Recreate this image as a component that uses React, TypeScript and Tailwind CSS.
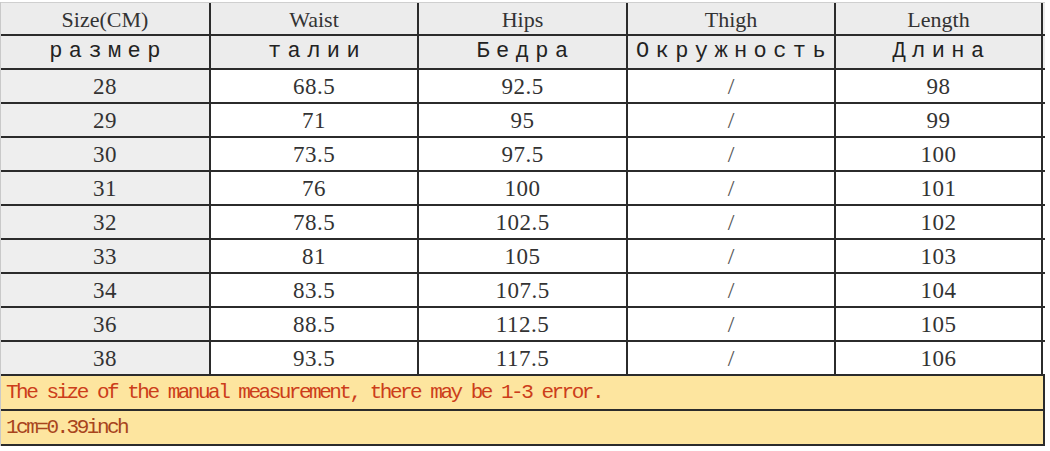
const rows = [
  ["28", "68.5", "92.5", "/", "98"],
  ["29", "71", "95", "/", "99"],
  ["30", "73.5", "97.5", "/", "100"],
  ["31", "76", "100", "/", "101"],
  ["32", "78.5", "102.5", "/", "102"],
  ["33", "81", "105", "/", "103"],
  ["34", "83.5", "107.5", "/", "104"],
  ["36", "88.5", "112.5", "/", "105"],
  ["38", "93.5", "117.5", "/", "106"],
];

const headEn = ["Size(CM)", "Waist", "Hips", "Thigh", "Length"];
const headRu = ["размер", "талии", "Бедра", "Окружность", "Длина"];

const grid = "grid grid-cols-[210px_208px_209px_208px_207px] h-[34px] border-b-2 border-[#2b2b2b]";
const cell = "flex items-center justify-center border-r-2 border-[#2b2b2b] leading-none overflow-hidden";

export default function App() {
  return (
    <div className="w-[1050px] h-[451px] bg-white pt-[2px] overflow-hidden">
      <div className="w-[1045px] border-l border-[#c9c9c9]">
        <div className={`${grid} border-t border-t-[#cfcfcf] bg-[#ececec]`}>
          {headEn.map((h) => (
            <div key={h} className={`${cell} pt-[2px] font-['Liberation_Serif',serif] text-[22px] text-[#333]`}>
              {h}
            </div>
          ))}
        </div>
        <div className={`${grid} bg-[#ececec]`}>
          {headRu.map((h) => (
            <div
              key={h}
              className={`${cell} font-['Liberation_Mono',monospace] text-[22px] tracking-[6.4px] text-[#222] pl-[6px]`}
            >
              {h}
            </div>
          ))}
        </div>
        {rows.map((r) => (
          <div key={r[0]} className={grid}>
            {r.map((v, i) => (
              <div
                key={i}
                className={`${cell} ${i === 0 ? "bg-[#eeeeee]" : "bg-white"} ${
                  v === "/" ? "text-[#555] text-[24px]" : "text-[#333] text-[23px] tracking-[0.5px]"
                } font-['Liberation_Serif',serif]`}
              >
                {v}
              </div>
            ))}
          </div>
        ))}
        <div className="h-[35px] border-b-2 border-r-2 border-[#2b2b2b] bg-[#fde59f] flex items-center pl-[5px] leading-none font-['Liberation_Mono',monospace] text-[21px] tracking-[-2.5px] text-[#cc3d1a]">
          The size of the manual measurement, there may be 1-3 error.
        </div>
        <div className="h-[35px] border-b-2 border-r-2 border-[#2b2b2b] bg-[#fde59f] flex items-center pl-[5px] leading-none font-['Liberation_Mono',monospace] text-[21px] tracking-[-2.5px] text-[#a8441c]">
          1cm=0.39inch
        </div>
      </div>
    </div>
  );
}
